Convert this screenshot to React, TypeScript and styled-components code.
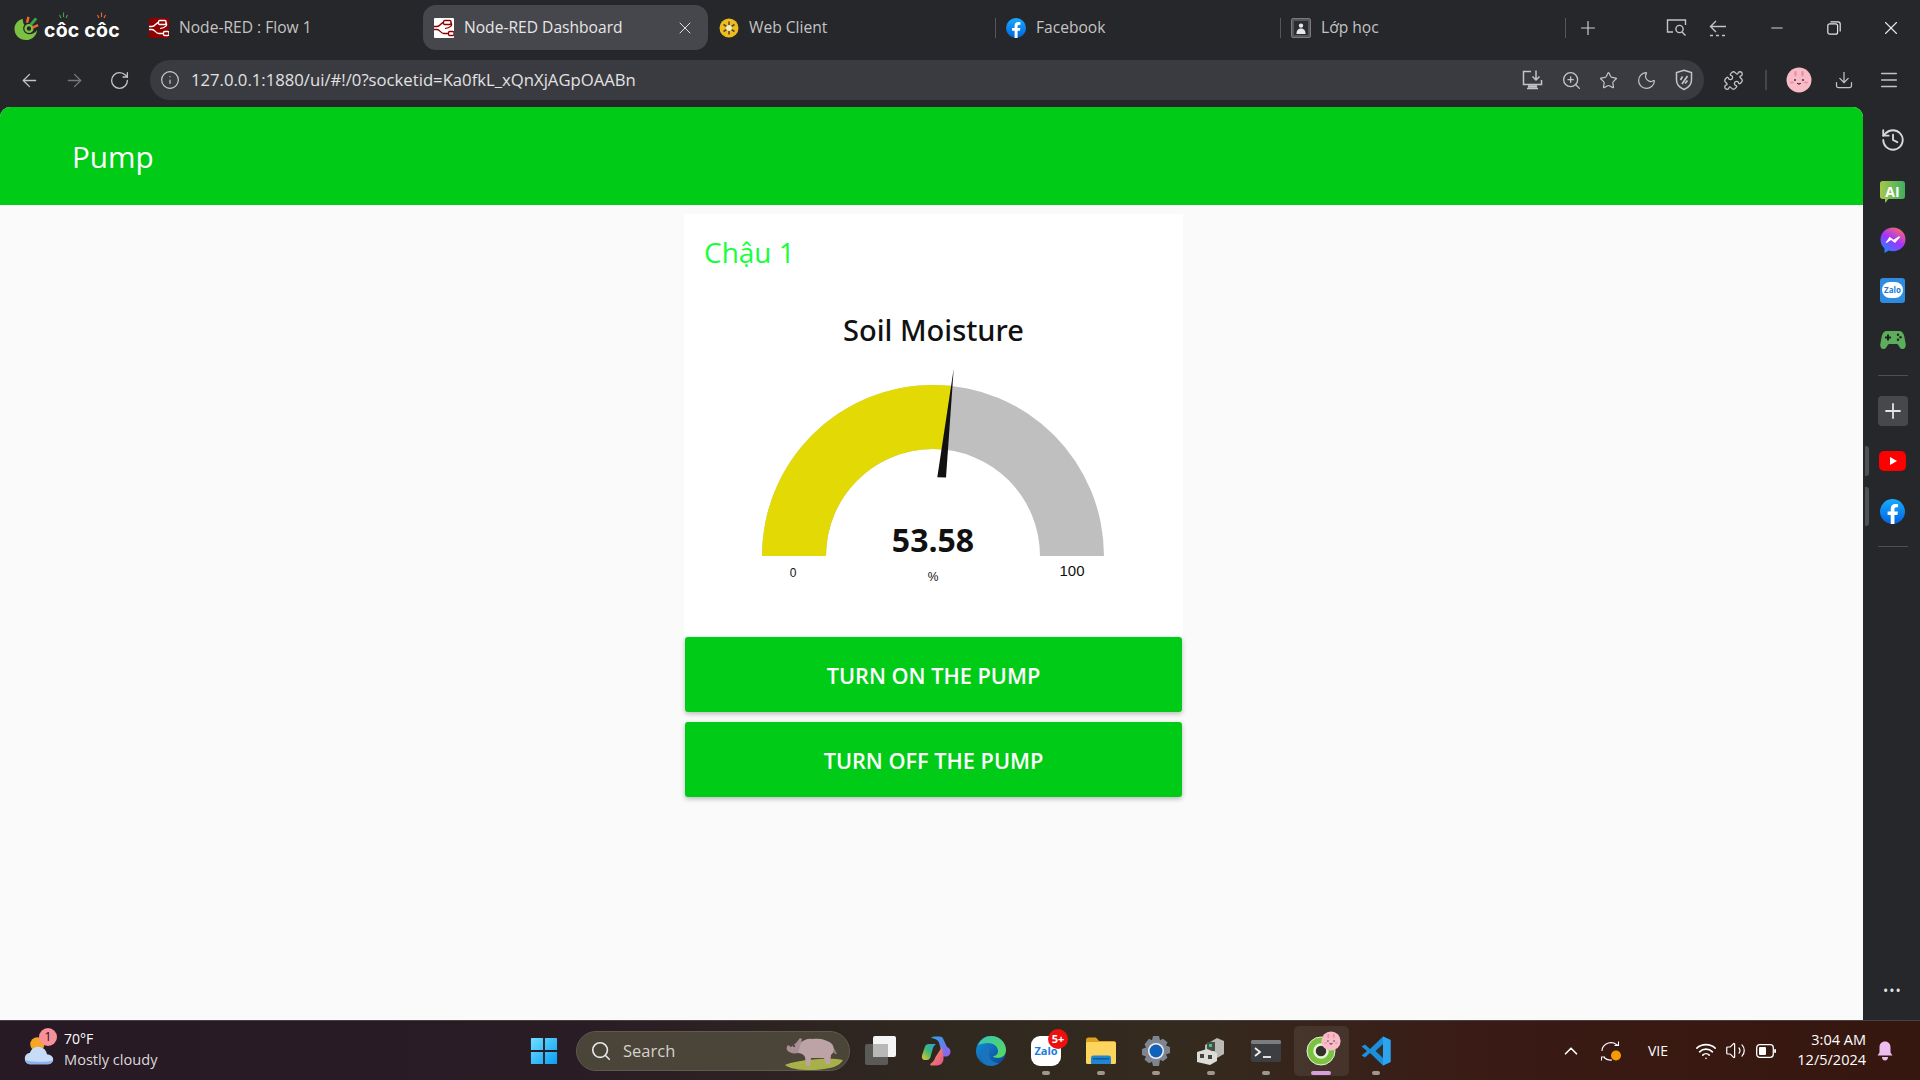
import React from 'react';
import styled, { createGlobalStyle } from 'styled-components';
import {
    ArrowLeft,
    ArrowRight,
    ChevronUp,
    Download,
    Info,
    Menu,
    Minus,
    Moon,
    Plus,
    Puzzle,
    RotateCw,
    Search,
    Star,
    Volume2,
    Wifi,
    X,
    ZoomIn,
    History,
} from 'lucide-react';

const GREEN = '#00cc17';
const UI_FONT = '"Open Sans", "Noto Sans", sans-serif';

const GlobalStyle = createGlobalStyle`
    html, body {
        margin: 0;
        padding: 0;
        background: #26272a;
        overflow: hidden;
    }
    * {
        box-sizing: border-box;
    }
`;

/* ---------- drawings ---------- */

const NodeRedIcon = ({ active }: { active?: boolean }) => {
    const bg = active ? '#ffffff' : '#8f0000';
    const fg = active ? '#8f0000' : '#ffffff';
    return (
        <svg width="20" height="20" viewBox="0 0 20 20">
            <rect width="20" height="20" rx="1" fill={bg} />
            <path
                d="M0 8.500h3c3.500 0 3.500-4 7-4M0 11.500h3c3 0 3.500 4 7 4h4"
                stroke={fg}
                strokeWidth="1.300"
                fill="none"
            />
            <rect x="9.500" y="2.500" width="7.500" height="4" rx="1.200" fill="none" stroke={fg} strokeWidth="1.300" />
            <rect x="14.500" y="13.500" width="5.500" height="4" rx="1.200" fill="none" stroke={fg} strokeWidth="1.300" />
            <path d="M17 4.500c2 3-1 5.500 -6 6" stroke={fg} strokeWidth="1.200" fill="none" />
        </svg>
    );
};

const WebClientIcon = () => (
    <svg width="20" height="20" viewBox="0 0 20 20">
        <circle cx="10" cy="10" r="9.500" fill="#f0bb1c" />
        <path d="M4.500 6.500l11 7M15.500 6.500l-11 7M10 3.500v13" stroke="#4a4a3a" strokeWidth="1.500" />
        <circle cx="10" cy="10" r="3" fill="#f6e9b8" />
    </svg>
);

const FacebookIcon = ({ size = 20 }: { size?: number }) => (
    <svg width={size} height={size} viewBox="0 0 24 24">
        <defs>
            <linearGradient id={`fb${size}`} x1="0" y1="0" x2="0" y2="1">
                <stop offset="0" stopColor="#18acfe" />
                <stop offset="1" stopColor="#0163e0" />
            </linearGradient>
        </defs>
        <circle cx="12" cy="12" r="12" fill={`url(#fb${size})`} />
        <path
            d="M16.700 15.400l.5-3.400h-3.300V9.800c0-.9.5-1.800 1.900-1.800h1.500V5.100s-1.300-.2-2.600-.2c-2.700 0-4.400 1.600-4.400 4.600V12h-3v3.400h3V24h3.600v-8.600z"
            fill="#fff"
        />
    </svg>
);

const ClassroomIcon = () => (
    <svg width="20" height="20" viewBox="0 0 20 20">
        <rect x="0.500" y="0.500" width="19" height="19" rx="1.500" fill="#55565a" stroke="#7a7b7e" />
        <rect x="3" y="3" width="14" height="14" fill="#2b2c2f" />
        <circle cx="10" cy="7.600" r="2.200" fill="#e8e8e8" />
        <path d="M5.500 16c0-4 2-5.400 4.500-5.400s4.500 1.400 4.500 5.400z" fill="#e8e8e8" />
    </svg>
);

const CaptureIcon = () => (
    <svg width="22" height="20" viewBox="0 0 22 20" fill="none" stroke="#c4c4c4" strokeWidth="1.400">
        <path d="M7 14H1.500V2h18v5" />
        <circle cx="13.500" cy="11" r="3.600" />
        <path d="M16 14l3.500 3.500" />
    </svg>
);

const BackDottedIcon = () => (
    <svg width="18" height="18" viewBox="0 0 18 18" fill="none" stroke="#c4c4c4" strokeWidth="1.400">
        <path d="M7 2L1.500 7.500 7 13M1.500 7.500H17" />
        <path d="M1 16.500h3M7 16.500h3M13 16.500h3" />
    </svg>
);

const RestoreIcon = () => (
    <svg width="14" height="14" viewBox="0 0 14 14" fill="none" stroke="#e4e4e4" strokeWidth="1.200">
        <rect x="0.800" y="2.800" width="9.800" height="10.400" rx="2" />
        <path d="M3.500 0.800h7.500c1.300 0 2.200.9 2.200 2.200v7.500" />
    </svg>
);

const InstallIcon = () => (
    <svg width="22" height="22" viewBox="0 0 22 22" fill="none" stroke="#c4c4c4" strokeWidth="1.500">
        <path d="M9 2.500H1.500v13h18V11M5 19.500h11" />
        <path d="M14 1.500v9M10.500 7.500l3.500 3.500 3.500-3.500" />
        <path d="M6 17.500h9" strokeWidth="2.500" />
    </svg>
);

const ShieldIcon = () => (
    <svg width="20" height="22" viewBox="0 0 20 22" fill="none" stroke="#c4c4c4" strokeWidth="1.500">
        <path d="M10 1.200l7.500 2.300v7.500c0 4.500-3.500 7.800-7.500 9.500-4-1.700-7.500-5-7.500-9.500V3.500z" />
        <path d="M6.500 11l2-3.500M8 15l5.500-8M11 14.500l2.500-3" strokeWidth="1.700" />
    </svg>
);

const BunnyFace = ({ size }: { size: number }) => (
    <svg width={size} height={size} viewBox="0 0 26 26">
        <circle cx="13" cy="13" r="12.500" fill="#f7bcc8" />
        <ellipse cx="9.500" cy="6.500" rx="1.300" ry="2.800" fill="#ef8fa4" />
        <ellipse cx="16.500" cy="6.500" rx="1.300" ry="2.800" fill="#ef8fa4" />
        <circle cx="9" cy="13" r="1" fill="#4a3030" />
        <circle cx="17" cy="13" r="1" fill="#4a3030" />
        <path d="M11 16c1 1.500 3 1.500 4 0" stroke="#4a3030" strokeWidth="1" fill="#a04050" />
        <ellipse cx="6" cy="15.500" rx="2" ry="0.900" fill="#ef8fa4" />
        <ellipse cx="20" cy="15.500" rx="2" ry="0.900" fill="#ef8fa4" />
    </svg>
);

const LogoMark = () => (
    <svg width="27" height="26" viewBox="0 0 28 26">
        <path
            d="M9 3.500C4 5 .5 9 .5 14c0 6.500 5.500 11.500 12 11.500 6 0 11-4.500 11.500-10.500-2 3-5 4.500-8 4.500-3.500 0-6.500-2.500-6.500-6 0-1.500.5-2.800 1.300-3.800C9.500 8.500 9.300 6 9 3.500z"
            fill="#7cc242"
        />
        <circle cx="15.500" cy="13.500" r="3.500" fill="none" stroke="#7cc242" strokeWidth="2.500" />
        <path d="M13.500 7.500L15 1.500" stroke="#ef6a32" strokeWidth="2.500" />
        <path d="M17.500 9.500L23 3" stroke="#3fa44a" strokeWidth="3" />
        <path d="M19 12.500l6-2.500" stroke="#ef6a32" strokeWidth="2.500" />
    </svg>
);

const AccentTicks = ({ color }: { color: string }) => (
    <svg width="9" height="7" viewBox="0 0 9 7" fill="none" stroke={color} strokeWidth="1.100">
        <path d="M2 6L.5 3M4.500 5V.5M7 6l1.500-3" />
    </svg>
);

const AiBadge = () => (
    <Badge>
        <svg width="27" height="24" viewBox="0 0 26 24">
            <defs>
                <linearGradient id="aiGrad" x1="0" y1="0" x2="1" y2="0">
                    <stop offset="0" stopColor="#a6c74a" />
                    <stop offset="1" stopColor="#3fae62" />
                </linearGradient>
            </defs>
            <path
                d="M3 1h20c1.500 0 2.500 1 2.500 2.500v13c0 1.500-1 2.500-2.500 2.500H9l-3.500 4v-4H3c-1.500 0-2.500-1-2.500-2.500v-13C.5 2 1.500 1 3 1z"
                fill="url(#aiGrad)"
            />
        </svg>
        <BadgeLabel>AI</BadgeLabel>
    </Badge>
);

const MessengerIcon = () => (
    <svg width="26" height="26" viewBox="0 0 26 26">
        <defs>
            <linearGradient id="msGrad" x1="0.200" y1="1" x2="0.800" y2="0">
                <stop offset="0" stopColor="#1a8cff" />
                <stop offset="0.500" stopColor="#a033ff" />
                <stop offset="1" stopColor="#ff6a68" />
            </linearGradient>
        </defs>
        <path
            d="M13 .5C6 .5.5 5.600.5 12.500c0 3.600 1.500 6.700 4 8.800V26l4.300-2.400c1.300.4 2.700.6 4.200.6 7 0 12.500-5 12.500-11.700S20 .5 13 .5z"
            fill="url(#msGrad)"
        />
        <path d="M5.500 16l4-6.300 4 3 5-3.200 2 .3-5.500 6.200-4-3-4.500 3z" fill="#fff" />
    </svg>
);

const ZaloSquare = () => (
    <ZaloBox>
        <ZaloBubble>Zalo</ZaloBubble>
    </ZaloBox>
);

const GamepadIcon = () => (
    <svg width="26" height="20" viewBox="0 0 26 20">
        <path
            d="M7 1h12c3 0 4.500 2 5.200 5l1.500 8c.4 2.500-.8 4.800-3 5-2 .2-3.200-1.500-4.200-3.500-.5-1-1-1.500-2-1.500h-7c-1 0-1.500.5-2 1.500-1 2-2.200 3.700-4.200 3.500-2.200-.2-3.400-2.500-3-5l1.500-8C2.500 3 4 1 7 1z"
            fill="#5cae5c"
        />
        <path d="M5 7.500h6M8 4.500v6" stroke="#222" strokeWidth="2" />
        <circle cx="18" cy="4.800" r="1.200" fill="#222" />
        <circle cx="18" cy="9.800" r="1.200" fill="#222" />
        <circle cx="20.500" cy="7.300" r="1.200" fill="#222" />
    </svg>
);

const YoutubeIcon = () => (
    <svg width="27" height="20" viewBox="0 0 27 20">
        <rect width="27" height="20" rx="5" fill="#f00" />
        <path d="M11 6l7 4-7 4z" fill="#fff" />
    </svg>
);

const WindowsIcon = () => (
    <svg width="30" height="30" viewBox="0 0 30 30">
        <defs>
            <linearGradient id="winGrad" x1="0" y1="0" x2="1" y2="1">
                <stop offset="0" stopColor="#6fe0ff" />
                <stop offset="1" stopColor="#0a9cf5" />
            </linearGradient>
        </defs>
        <path d="M1 2a1 1 0 011-1h12v13H1zM16 1h12a1 1 0 011 1v12H16zM1 16h13v13H2a1 1 0 01-1-1zM16 16h13v12a1 1 0 01-1 1H16z" fill="url(#winGrad)" />
    </svg>
);

const RhinoArt = () => (
    <svg width="60" height="40" viewBox="0 0 60 40">
        <path d="M1 34c10-5 45-8 58-5-3 6-12 9-28 10-14 .5-25-1-30-5z" fill="#a8b04a" />
        <path d="M47 14c3 3 5 6 6 9l-2 0-5-5z" fill="#8c7a7c" />
        <path
            d="M16 12c4-3 8-5 12-4 8-1 16 1 20 5 3 4 2 9-1 11l-1 9h-4l-2-6H27l-1 8h-4l-1-9c-2-3-4-4-7-4-4 0-8 0-10-3z"
            fill="#bea3a6"
        />
        <path d="M3 19c-1-2 0-4 1-5l3 2 5-4 4-5 2 1-1 4-3 10c-4 1-9 0-11-3z" fill="#a98f95" />
        <circle cx="10" cy="15" r="1" fill="#2a2d4a" />
    </svg>
);

const TaskViewIcon = () => (
    <svg width="32" height="30" viewBox="0 0 32 30">
        <rect x="0" y="8" width="23" height="21" rx="2" fill="#5a5a58" />
        <rect x="8" y="0" width="23" height="21" rx="2" fill="#f5f5f5" />
        <rect x="8" y="8" width="15" height="13" fill="#b8b8b6" />
    </svg>
);

const CopilotIcon = () => (
    <svg width="30" height="30" viewBox="0 0 30 30">
        <defs>
            <linearGradient id="copA" x1="0" y1="0" x2="1" y2="1">
                <stop offset="0" stopColor="#2aa6e8" />
                <stop offset="1" stopColor="#9a5cf0" />
            </linearGradient>
            <linearGradient id="copB" x1="0" y1="1" x2="1" y2="0">
                <stop offset="0" stopColor="#f4c820" />
                <stop offset="0.500" stopColor="#3cb878" />
                <stop offset="1" stopColor="#2f9fe0" />
            </linearGradient>
            <linearGradient id="copC" x1="0" y1="0" x2="1" y2="1">
                <stop offset="0" stopColor="#ff9a50" />
                <stop offset="1" stopColor="#e04f90" />
            </linearGradient>
        </defs>
        <path d="M10 2c1-1 2-1.500 3.500-1.500h5c2 0 3.500 1 4 3L26 11c1.500.5 3.500 2 3.500 4.500 0 3-2 5-5 5h-3l-3-12C18 4.500 15 2.500 10 2z" fill="url(#copA)" />
        <path d="M7.500 8H15c-2 1.500-3 3.500-3.500 5.500L9.500 21c-.5 2-2 3-3.500 3H4c-2.500 0-3.500-2-3-4.500l3-9C4.500 9 6 8 7.500 8z" fill="url(#copB)" />
        <path d="M21 11c0 1 .5 2 .5 3l1 7c.5 3-1 8-6 8.500h-5.500c-2.500 0-2-1.500-.5-2.500 2-1.500 3-3 4-6z" fill="url(#copC)" />
    </svg>
);

const EdgeIcon = () => (
    <svg width="30" height="30" viewBox="0 0 30 30">
        <defs>
            <linearGradient id="edgeA" x1="0" y1="0" x2="1" y2="1">
                <stop offset="0" stopColor="#38c6b0" />
                <stop offset="1" stopColor="#5cd85c" />
            </linearGradient>
            <linearGradient id="edgeB" x1="0" y1="0" x2="1" y2="1">
                <stop offset="0" stopColor="#1596d8" />
                <stop offset="1" stopColor="#0a3f94" />
            </linearGradient>
        </defs>
        <circle cx="15" cy="15" r="15" fill="url(#edgeB)" />
        <path d="M2 9C5 3 10 0 15 0c8 0 15 6 15 14 0 5-4 8-8 8-3 0-5-1-5-2 3 0 5-2 5-5 0-5-5-8-10-8-4 0-8 1-10 2z" fill="url(#edgeA)" />
        <path d="M13 19c0 4 4 8 10 8-2 2-5 3-8 3-5 0-9-3-10-8-1-6 4-11 10-11-1 2-2 5-2 8z" fill="#1b72bd" />
    </svg>
);

const ZaloAppIcon = () => (
    <ZaloApp>
        <ZaloAppText>Zalo</ZaloAppText>
        <NotifyDot>5+</NotifyDot>
    </ZaloApp>
);

const FolderIcon = () => (
    <svg width="30" height="27" viewBox="0 0 30 27">
        <path d="M0 3c0-1.500 1-2.500 2.500-2.500H10L13 4h15c1 0 2 1 2 2v2H0z" fill="#e0a21c" />
        <rect y="5" width="30" height="22" rx="1.500" fill="#fcd55f" />
        <path d="M5 27v-6c0-1.500 1-2.500 2.500-2.500h15c1.500 0 2.500 1 2.500 2.500v6z" fill="#1f86cf" />
        <rect x="7" y="21" width="16" height="1.600" fill="#0f5f9f" />
    </svg>
);

const SettingsIcon = () => (
    <svg width="30" height="30" viewBox="0 0 30 30">
        <path
            d="M12 0h6l1 4.200 3-1.500 4.500 3.500-1.500 3.300 4 1.500v6l-4 1.500 1.500 3.300-4.500 3.500-3-1.500L18 30h-6l-1-4.200-3 1.500-4.500-3.500 1.500-3.300-4-1.500v-6l4-1.500-1.500-3.300L8 2.700l3 1.500z"
            fill="#7d8591"
        />
        <circle cx="15" cy="15" r="8" fill="#f0f0f0" />
        <circle cx="15" cy="15" r="6.500" fill="#0f62b8" />
    </svg>
);

const ServerAppIcon = () => (
    <svg width="28" height="28" viewBox="0 0 28 28">
        <path d="M8 8l12-7 7 3v13l-7 4H8z" fill="#b9b9b5" />
        <path d="M10 5h8v9h-8z" fill="#4a4d4a" />
        <rect x="12" y="7" width="3" height="3" fill="#35d070" />
        <path d="M0 15l10-3 10 4v8l-7 4-13-3z" fill="#dcdcd8" />
        <rect x="3" y="17" width="4" height="4" fill="#444" />
        <rect x="11" y="18" width="4" height="4" fill="#444" />
    </svg>
);

const TerminalIcon = () => (
    <svg width="30" height="22" viewBox="0 0 30 22">
        <rect width="30" height="22" rx="2" fill="#3c3e42" />
        <rect width="30" height="4" rx="1.500" fill="#7a7c80" />
        <path d="M4 8l5 4-5 4" stroke="#f2f2f2" strokeWidth="1.800" fill="none" />
        <path d="M12 17h8" stroke="#f2f2f2" strokeWidth="1.800" />
    </svg>
);

const CocCocAppIcon = () => (
    <CocStack>
        <svg width="30" height="30" viewBox="0 0 30 30">
            <circle cx="15" cy="15" r="14" fill="#7cc242" stroke="#e8f4d8" strokeWidth="1" />
            <circle cx="15" cy="15" r="6.500" fill="#33302a" stroke="#e8f4d8" strokeWidth="2.500" />
        </svg>
        <CocAvatar>
            <BunnyFace size={20} />
        </CocAvatar>
    </CocStack>
);

const VsCodeIcon = () => (
    <svg width="30" height="30" viewBox="0 0 30 30">
        <path d="M22 .5L29.500 4v22L22 29.500 9 17l-5 4.500-3.500-2L6 15 .5 10.500l3.500-2L9 13z" fill="#1a8fdc" />
        <path d="M22 8l-7.500 7 7.500 7z" fill="#33302a" />
        <path d="M22 .5L29.500 4v22L22 29.500z" fill="#2aa5ee" />
    </svg>
);

const SyncIcon = () => (
    <svg width="22" height="22" viewBox="0 0 22 22" fill="none" stroke="#fff" strokeWidth="1.100">
        <path d="M2 11C2 5 8 1.500 14 3l4 2.500M18.500 1.500v4h-4" />
        <path d="M12 20c-3 .5-6-.5-8-2.500M1.500 20.500v-3.500h3.500" />
        <circle cx="16" cy="15.500" r="5" fill="#f59a00" stroke="none" />
    </svg>
);

const BatteryIcon = () => (
    <svg width="20" height="14" viewBox="0 0 20 14">
        <rect x="0.700" y="0.700" width="16.600" height="12.600" rx="3" fill="none" stroke="#fff" strokeWidth="1.300" />
        <rect x="3" y="3" width="7" height="8" rx="1" fill="#fff" />
        <rect x="18.200" y="5" width="1.800" height="4" rx="0.800" fill="#fff" />
    </svg>
);

const BellIcon = () => (
    <svg width="16" height="20" viewBox="0 0 16 20">
        <path d="M8 .5c3.500 0 5.500 2.500 5.500 6v5l2 3H.5l2-3v-5C2.500 3 4.500.5 8 .5z" fill="#ecbdee" />
        <path d="M5 16h6c0 2-1.200 3.500-3 3.500S5 18 5 16z" fill="#ecbdee" />
    </svg>
);

const CloudIcon = () => (
    <svg width="36" height="34" viewBox="0 0 36 34">
        <circle cx="16" cy="9" r="8.500" fill="#f5a623" />
        <path d="M8 33C3 33 1 29 1 26c0-4 3-6.500 6-6.500C8.500 15 12.500 12 17 12c6 0 10 4.500 10.500 9 4 .2 7.500 2.500 7.500 6s-3 6-7 6z" fill="#c6dcf7" />
        <path d="M8 33c-4 0-6.500-2.500-7-5.500 5 3 27 3 34 .5-.5 3-3.500 5-7 5z" fill="#8fb2e6" />
    </svg>
);

/* ---------- gauge ---------- */

const GaugeChart = ({ value }: { value: number }) => {
    const cx = 249;
    const cy = 191;
    const outer = 171;
    const inner = 107;
    const angle = Math.PI - (value / 100) * Math.PI;
    const ox = cx + outer * Math.cos(angle);
    const oy = cy - outer * Math.sin(angle);
    const ix = cx + inner * Math.cos(angle);
    const iy = cy - inner * Math.sin(angle);

    const band = `M${cx - outer} ${cy}A${outer} ${outer} 0 0 1 ${cx + outer} ${cy}L${cx + inner} ${cy}A${inner} ${inner} 0 0 0 ${cx - inner} ${cy}Z`;
    const filled = `M${cx - outer} ${cy}A${outer} ${outer} 0 0 1 ${ox} ${oy}L${ix} ${iy}A${inner} ${inner} 0 0 0 ${cx - inner} ${cy}Z`;

    return (
        <GaugeSvg viewBox="0 0 499 225" width="499" height="225">
            <path d={band} fill="#bfbfbf" />
            <path d={filled} fill="#e2d905" />
            <path d="M269.700 3.700L253.300 112.300L262 112.600Z" fill="#111" />
            <GaugeValue x={cx} y={187} textAnchor="middle">
                {value.toFixed(2)}
            </GaugeValue>
            <GaugeLabel x={109} y={212} textAnchor="middle" $size={12}>
                0
            </GaugeLabel>
            <GaugeLabel x={249} y={216} textAnchor="middle" $size={12}>
                %
            </GaugeLabel>
            <GaugeLabel x={388} y={211} textAnchor="middle" $size={15}>
                100
            </GaugeLabel>
        </GaugeSvg>
    );
};

/* ---------- page ---------- */

const App = () => {
    return (
        <Screen>
            <GlobalStyle />
            <TabStrip>
                <Logo>
                    <LogoMark />
                    <LogoWord>
                        côc côc
                        <LogoTicks $left={15}>
                            <AccentTicks color="#3fa44a" />
                        </LogoTicks>
                        <LogoTicks $left={53}>
                            <AccentTicks color="#ef6a32" />
                        </LogoTicks>
                    </LogoWord>
                </Logo>
                <Tab>
                    <NodeRedIcon />
                    <TabTitle>Node-RED : Flow 1</TabTitle>
                </Tab>
                <Tab $active>
                    <NodeRedIcon active />
                    <TabTitle>Node-RED Dashboard</TabTitle>
                    <TabClose>
                        <X size={20} strokeWidth={1.2} />
                    </TabClose>
                </Tab>
                <Tab>
                    <WebClientIcon />
                    <TabTitle>Web Client</TabTitle>
                </Tab>
                <Tab $divided>
                    <FacebookIcon />
                    <TabTitle>Facebook</TabTitle>
                </Tab>
                <Tab $divided>
                    <ClassroomIcon />
                    <TabTitle>Lớp học</TabTitle>
                </Tab>
                <NewTab>
                    <Plus size={22} strokeWidth={1.3} />
                </NewTab>
                <WindowControls>
                    <ControlSlot $w={22}>
                        <CaptureIcon />
                    </ControlSlot>
                    <ControlSlot $w={60}>
                        <BackDottedIcon />
                    </ControlSlot>
                    <ControlSlot $w={57}>
                        <Minus size={18} strokeWidth={1.2} />
                    </ControlSlot>
                    <ControlSlot $w={57}>
                        <RestoreIcon />
                    </ControlSlot>
                    <ControlSlot $w={57}>
                        <X size={22} strokeWidth={1.2} />
                    </ControlSlot>
                </WindowControls>
            </TabStrip>

            <Toolbar>
                <NavButton>
                    <ArrowLeft size={21} strokeWidth={1.5} />
                </NavButton>
                <NavButton $dim>
                    <ArrowRight size={21} strokeWidth={1.5} />
                </NavButton>
                <NavButton>
                    <RotateCw size={21} strokeWidth={1.5} />
                </NavButton>
                <AddressBar>
                    <Info size={20} strokeWidth={1.4} color="#d0d0d0" />
                    <UrlText>127.0.0.1:1880/ui/#!/0?socketid=Ka0fkL_xQnXjAGpOAABn</UrlText>
                    <AddressActions>
                        <ActionSlot>
                            <InstallIcon />
                        </ActionSlot>
                        <ActionSlot>
                            <ZoomIn size={21} strokeWidth={1.5} />
                        </ActionSlot>
                        <ActionSlot>
                            <Star size={19} strokeWidth={1.5} />
                        </ActionSlot>
                        <ActionSlot>
                            <Moon size={21} strokeWidth={1.4} />
                        </ActionSlot>
                        <ActionSlot>
                            <ShieldIcon />
                        </ActionSlot>
                    </AddressActions>
                </AddressBar>
                <ToolSlot $w={60}>
                    <Puzzle size={21} strokeWidth={1.5} />
                </ToolSlot>
                <ToolDivider />
                <ToolSlot $w={62}>
                    <BunnyFace size={26} />
                </ToolSlot>
                <ToolSlot $w={28}>
                    <Download size={20} strokeWidth={1.5} />
                </ToolSlot>
                <ToolSlot $w={62}>
                    <Menu size={22} strokeWidth={1.6} />
                </ToolSlot>
            </Toolbar>

            <Body>
                <Main>
                    <DashboardHeader>Pump</DashboardHeader>
                    <Board>
                        <Card>
                            <GroupTitle>Chậu 1</GroupTitle>
                            <GaugeTitle>Soil Moisture</GaugeTitle>
                            <GaugeChart value={53.58} />
                        </Card>
                        <PumpButton>TURN ON THE PUMP</PumpButton>
                        <PumpButton>TURN OFF THE PUMP</PumpButton>
                    </Board>
                </Main>
                <Sidebar>
                    <SideSlot>
                        <History size={26} strokeWidth={1.7} color="#d8d8d8" />
                    </SideSlot>
                    <SideSlot>
                        <AiBadge />
                    </SideSlot>
                    <SideSlot>
                        <MessengerIcon />
                    </SideSlot>
                    <SideSlot>
                        <ZaloSquare />
                    </SideSlot>
                    <SideSlot>
                        <GamepadIcon />
                    </SideSlot>
                    <SideDivider />
                    <SideSlot>
                        <AddPanel>
                            <Plus size={24} strokeWidth={1.8} />
                        </AddPanel>
                    </SideSlot>
                    <SideSlot>
                        <SideHandle $top={10} $len={30} />
                        <YoutubeIcon />
                    </SideSlot>
                    <SideSlot>
                        <SideHandle $top={1} $len={39} />
                        <FacebookIcon size={25} />
                    </SideSlot>
                    <SideDivider />
                    <SideDots>•••</SideDots>
                </Sidebar>
            </Body>

            <Taskbar>
                <Weather>
                    <WeatherArt>
                        <CloudIcon />
                        <WeatherBadge>1</WeatherBadge>
                    </WeatherArt>
                    <WeatherText>
                        <WeatherTemp>70°F</WeatherTemp>
                        <WeatherState>Mostly cloudy</WeatherState>
                    </WeatherText>
                </Weather>
                <StartButton>
                    <WindowsIcon />
                </StartButton>
                <SearchPill>
                    <Search size={22} strokeWidth={1.8} color="#e6e6e6" />
                    <SearchText>Search</SearchText>
                    <RhinoBox>
                        <RhinoArt />
                    </RhinoBox>
                </SearchPill>
                <AppSlot>
                    <TaskViewIcon />
                </AppSlot>
                <AppSlot>
                    <CopilotIcon />
                </AppSlot>
                <AppSlot>
                    <EdgeIcon />
                </AppSlot>
                <AppSlot $running>
                    <ZaloAppIcon />
                </AppSlot>
                <AppSlot $running>
                    <FolderIcon />
                </AppSlot>
                <AppSlot $running>
                    <SettingsIcon />
                </AppSlot>
                <AppSlot $running>
                    <ServerAppIcon />
                </AppSlot>
                <AppSlot $running>
                    <TerminalIcon />
                </AppSlot>
                <AppSlot $focused>
                    <CocCocAppIcon />
                </AppSlot>
                <AppSlot $running>
                    <VsCodeIcon />
                </AppSlot>
                <Tray>
                    <TraySlot $w={40}>
                        <ChevronUp size={22} strokeWidth={1.8} />
                    </TraySlot>
                    <TraySlot $w={40}>
                        <SyncIcon />
                    </TraySlot>
                    <TraySlot $w={54}>
                        <TrayText>VIE</TrayText>
                    </TraySlot>
                    <TraySlot $w={42}>
                        <Wifi size={22} strokeWidth={1.8} />
                    </TraySlot>
                    <TraySlot $w={16}>
                        <Volume2 size={21} strokeWidth={1.4} />
                    </TraySlot>
                    <TraySlot $w={46}>
                        <BatteryIcon />
                    </TraySlot>
                    <Clock>
                        <span>3:04 AM</span>
                        <span>12/5/2024</span>
                    </Clock>
                    <TraySlot $w={38}>
                        <BellIcon />
                    </TraySlot>
                </Tray>
            </Taskbar>
        </Screen>
    );
};

export default App;

const Screen = styled.div`
    width: 1920px;
    height: 1080px;
    display: flex;
    flex-direction: column;
    background: #26272a;
    font-family: ${UI_FONT};
    overflow: hidden;
`;

const TabStrip = styled.div`
    display: flex;
    align-items: center;
    height: 55px;
    padding: 5px 0;
    flex-shrink: 0;
`;

const Logo = styled.div`
    width: 138px;
    display: flex;
    align-items: center;
    gap: 3px;
    padding-left: 14px;
`;

const LogoWord = styled.span`
    position: relative;
    color: #fff;
    font-family: 'Inter', sans-serif;
    font-size: 19.500px;
    font-weight: 700;
    letter-spacing: 0.2px;
    margin-top: 5px;
    white-space: nowrap;
`;

const LogoTicks = styled.span<{ $left: number }>`
    position: absolute;
    left: ${(p) => p.$left}px;
    top: -6px;
    display: flex;
`;

const Tab = styled.div<{ $active?: boolean; $divided?: boolean }>`
    position: relative;
    width: 285px;
    height: 45px;
    display: flex;
    align-items: center;
    gap: 10px;
    padding: 0 13px 0 ${(p) => (p.$divided ? 13 : 11)}px;
    border-radius: 13px;
    background: ${(p) => (p.$active ? '#46474c' : 'transparent')};
    color: ${(p) => (p.$active ? '#e6e6e6' : '#c4c4c4')};

    ${(p) =>
        p.$divided &&
        `&::before {
            content: '';
            position: absolute;
            left: 2px;
            top: 13px;
            width: 1px;
            height: 20px;
            background: #55565a;
        }`}
`;

const TabTitle = styled.span`
    font-size: 15.600px;
    margin-top: -1px;
    white-space: nowrap;
`;

const TabClose = styled.span`
    display: flex;
    margin-left: auto;
    color: #e0e0e0;
`;

const NewTab = styled.div`
    position: relative;
    width: 50px;
    height: 45px;
    display: flex;
    align-items: center;
    justify-content: center;
    color: #d0d0d0;

    &::before {
        content: '';
        position: absolute;
        left: 2px;
        top: 13px;
        width: 1px;
        height: 20px;
        background: #55565a;
    }
`;

const WindowControls = styled.div`
    display: flex;
    margin-left: auto;
    padding-right: 1px;
    height: 45px;
    color: #e8e8e8;
`;

const ControlSlot = styled.div<{ $w: number }>`
    width: ${(p) => p.$w}px;
    display: flex;
    align-items: center;
    justify-content: center;

    & > svg {
        flex-shrink: 0;
    }
`;

const Toolbar = styled.div`
    display: flex;
    align-items: flex-start;
    height: 52px;
    padding: 5px 0 0 7.500px;
    flex-shrink: 0;
    color: #c4c4c4;
`;

const NavButton = styled.div<{ $dim?: boolean }>`
    width: 45px;
    height: 40px;
    display: flex;
    align-items: center;
    justify-content: center;
    color: ${(p) => (p.$dim ? '#77787b' : '#c4c4c4')};
`;

const AddressBar = styled.div`
    width: 1555px;
    height: 40px;
    margin-left: 7.500px;
    display: flex;
    align-items: center;
    gap: 11px;
    padding-left: 10px;
    border-radius: 20px;
    background: #3a3b40;
`;

const UrlText = styled.span`
    color: #e2e2e2;
    font-size: 16.700px;
    margin-top: -2px;
    white-space: nowrap;
`;

const AddressActions = styled.div`
    display: flex;
    margin-left: auto;
    padding-right: 1px;
`;

const ActionSlot = styled.div`
    width: 37.700px;
    display: flex;
    justify-content: center;
    align-items: center;
`;

const ToolSlot = styled.div<{ $w: number }>`
    width: ${(p) => p.$w}px;
    height: 40px;
    flex-shrink: 0;
    display: flex;
    align-items: center;
    justify-content: center;
`;

const ToolDivider = styled.div`
    width: 2px;
    height: 20px;
    margin: 10px 1px;
    background: #45464a;
`;

const Body = styled.div`
    flex: 1;
    display: flex;
    min-height: 0;
`;

const Main = styled.main`
    width: 1863px;
    display: flex;
    flex-direction: column;
    background: #fafafa;
    border-radius: 10px 10px 0 0;
`;

const DashboardHeader = styled.header`
    height: 98px;
    display: flex;
    align-items: center;
    padding: 1px 0 0 72px;
    background: ${GREEN};
    border-radius: 10px 10px 0 0;
    color: #fff;
    font-size: 29.700px;
`;

const Board = styled.div`
    width: 499px;
    margin: 9px 0 0 684px;
    display: flex;
    flex-direction: column;
    align-items: center;
`;

const Card = styled.section`
    width: 499px;
    height: 422px;
    background: #fff;
    display: flex;
    flex-direction: column;
    margin-bottom: 1px;
`;

const GroupTitle = styled.h2`
    margin: 16px 0 0 20px;
    height: 44px;
    line-height: 44px;
    color: #16ff3c;
    font-size: 28px;
    font-weight: 400;
`;

const GaugeTitle = styled.h3`
    margin: 34px 0 0;
    height: 44px;
    line-height: 44px;
    text-align: center;
    color: #111;
    font-family: 'Noto Sans', sans-serif;
    font-size: 29px;
    font-weight: 500;
`;

const GaugeSvg = styled.svg`
    display: block;
    margin-top: 13px;
`;

const GaugeValue = styled.text`
    font-family: ${UI_FONT};
    font-size: 32px;
    font-weight: 700;
    fill: #111;
`;

const GaugeLabel = styled.text<{ $size: number }>`
    font-family: 'Liberation Sans', sans-serif;
    font-size: ${(p) => p.$size}px;
    fill: #111;
`;

const PumpButton = styled.button`
    width: 497px;
    height: 75px;
    margin-bottom: 10px;
    padding: 2px 0 0;
    border: none;
    border-radius: 3px;
    background: ${GREEN};
    color: #fff;
    font-family: ${UI_FONT};
    font-size: 21.700px;
    font-weight: 600;
    box-shadow: 0 2px 5px rgba(0, 0, 0, 0.26);
`;

const Sidebar = styled.aside`
    width: 57px;
    display: flex;
    flex-direction: column;
    align-items: center;
    padding: 8px 0 0 2px;
`;

const SideSlot = styled.div`
    position: relative;
    width: 100%;
    height: 50px;
    display: flex;
    align-items: center;
    justify-content: center;
`;

const SideHandle = styled.div<{ $top: number; $len: number }>`
    position: absolute;
    left: 0;
    top: ${(p) => p.$top}px;
    width: 4px;
    height: ${(p) => p.$len}px;
    border-radius: 0 3px 3px 0;
    background: #4f5054;
`;

const SideDivider = styled.div`
    width: 30px;
    height: 1px;
    margin: 10px 0;
    background: #4d4e52;
`;

const SideDots = styled.div`
    margin-top: auto;
    margin-bottom: 17px;
    color: #e4e4e4;
    font-size: 14px;
    letter-spacing: 1px;
    line-height: 24px;
`;

const Badge = styled.div`
    position: relative;
    display: flex;
    margin-top: 3px;
`;

const BadgeLabel = styled.span`
    position: absolute;
    left: 0;
    right: 0;
    top: 2px;
    text-align: center;
    color: #fff;
    font-size: 14px;
    font-weight: 700;
`;

const ZaloBox = styled.div`
    width: 25px;
    height: 25px;
    display: flex;
    align-items: center;
    justify-content: center;
    border-radius: 3px;
    background: #2d8be0;
`;

const ZaloBubble = styled.div`
    width: 21px;
    height: 16px;
    border-radius: 8px;
    background: #fff;
    color: #1a7ce0;
    font-size: 8px;
    font-weight: 700;
    line-height: 16px;
    text-align: center;
`;

const AddPanel = styled.div`
    width: 30px;
    height: 30px;
    display: flex;
    align-items: center;
    justify-content: center;
    border-radius: 4px;
    background: #47484b;
    color: #e4e4e4;
`;

const Taskbar = styled.footer`
    height: 60px;
    flex-shrink: 0;
    display: flex;
    align-items: center;
    border-top: 1px solid #45423f;
    background: linear-gradient(90deg, #271a25 0%, #2a1c25 30%, #30291f 50%, #352a1e 62%, #3a1a14 78%, #36170f 100%);
`;

const Weather = styled.div`
    width: 530px;
    display: flex;
    align-items: center;
    gap: 10px;
    padding-left: 24px;
`;

const WeatherArt = styled.div`
    position: relative;
    width: 30px;
    height: 34px;
    display: flex;
`;

const WeatherBadge = styled.span`
    position: absolute;
    top: -6px;
    left: 15px;
    width: 18px;
    height: 18px;
    border-radius: 50%;
    background: #f8909a;
    color: #1c1014;
    font-size: 12px;
    line-height: 18px;
    text-align: center;
`;

const WeatherText = styled.div`
    display: flex;
    flex-direction: column;
    line-height: 20px;
    margin-top: -3px;
`;

const WeatherTemp = styled.span`
    color: #fff;
    font-size: 14px;
`;

const WeatherState = styled.span`
    color: #dcd8d8;
    font-size: 14.600px;
`;

const StartButton = styled.div`
    width: 28px;
    display: flex;
    justify-content: center;
`;

const SearchPill = styled.div`
    width: 274px;
    height: 40px;
    margin: 0 3.500px 0 18px;
    display: flex;
    align-items: center;
    gap: 11px;
    padding-left: 13px;
    border-radius: 20px;
    border: 1px solid #5e5a4c;
    background: #4a4439;
    position: relative;
`;

const SearchText = styled.span`
    color: #d4d2cc;
    font-size: 16.500px;
`;

const RhinoBox = styled.div`
    position: absolute;
    right: 5px;
    top: -1px;
    display: flex;
`;

const AppSlot = styled.div<{ $running?: boolean; $focused?: boolean }>`
    position: relative;
    width: 55px;
    height: 50px;
    display: flex;
    align-items: center;
    justify-content: center;
    border-radius: 5px;
    background: ${(p) => (p.$focused ? 'rgba(255, 255, 255, 0.08)' : 'transparent')};

    ${(p) =>
        (p.$running || p.$focused) &&
        `&::after {
            content: '';
            position: absolute;
            bottom: 1px;
            left: 50%;
            transform: translateX(-50%);
            width: ${p.$focused ? 20 : 8}px;
            height: 4px;
            border-radius: 2px;
            background: ${p.$focused ? '#d8a0e0' : '#9c9890'};
        }`}
`;

const ZaloApp = styled.div`
    position: relative;
    width: 30px;
    height: 30px;
    border-radius: 9px;
    background: #fff;
    display: flex;
    align-items: center;
    justify-content: center;
`;

const ZaloAppText = styled.span`
    color: #1a7ce0;
    font-size: 11px;
    font-weight: 700;
`;

const NotifyDot = styled.span`
    position: absolute;
    top: -7px;
    right: -7px;
    width: 20px;
    height: 20px;
    border-radius: 50%;
    background: #ee0f0f;
    color: #fff;
    font-size: 11px;
    font-weight: 700;
    line-height: 20px;
    text-align: center;
`;

const CocStack = styled.div`
    position: relative;
    display: flex;
`;

const CocAvatar = styled.div`
    position: absolute;
    top: -5px;
    right: -5px;
    display: flex;
`;

const Tray = styled.div`
    display: flex;
    align-items: center;
    margin-left: auto;
    padding-right: 16px;
    color: #fff;
`;

const TraySlot = styled.div<{ $w: number }>`
    width: ${(p) => p.$w}px;
    display: flex;
    align-items: center;
    justify-content: center;

    & > svg {
        flex-shrink: 0;
    }
`;

const TrayText = styled.span`
    font-size: 14px;
`;

const Clock = styled.div`
    width: 77px;
    margin-top: -2px;
    display: flex;
    flex-direction: column;
    align-items: flex-end;
    color: #fff;
    font-size: 14.500px;
    line-height: 20px;
    white-space: nowrap;
`;
